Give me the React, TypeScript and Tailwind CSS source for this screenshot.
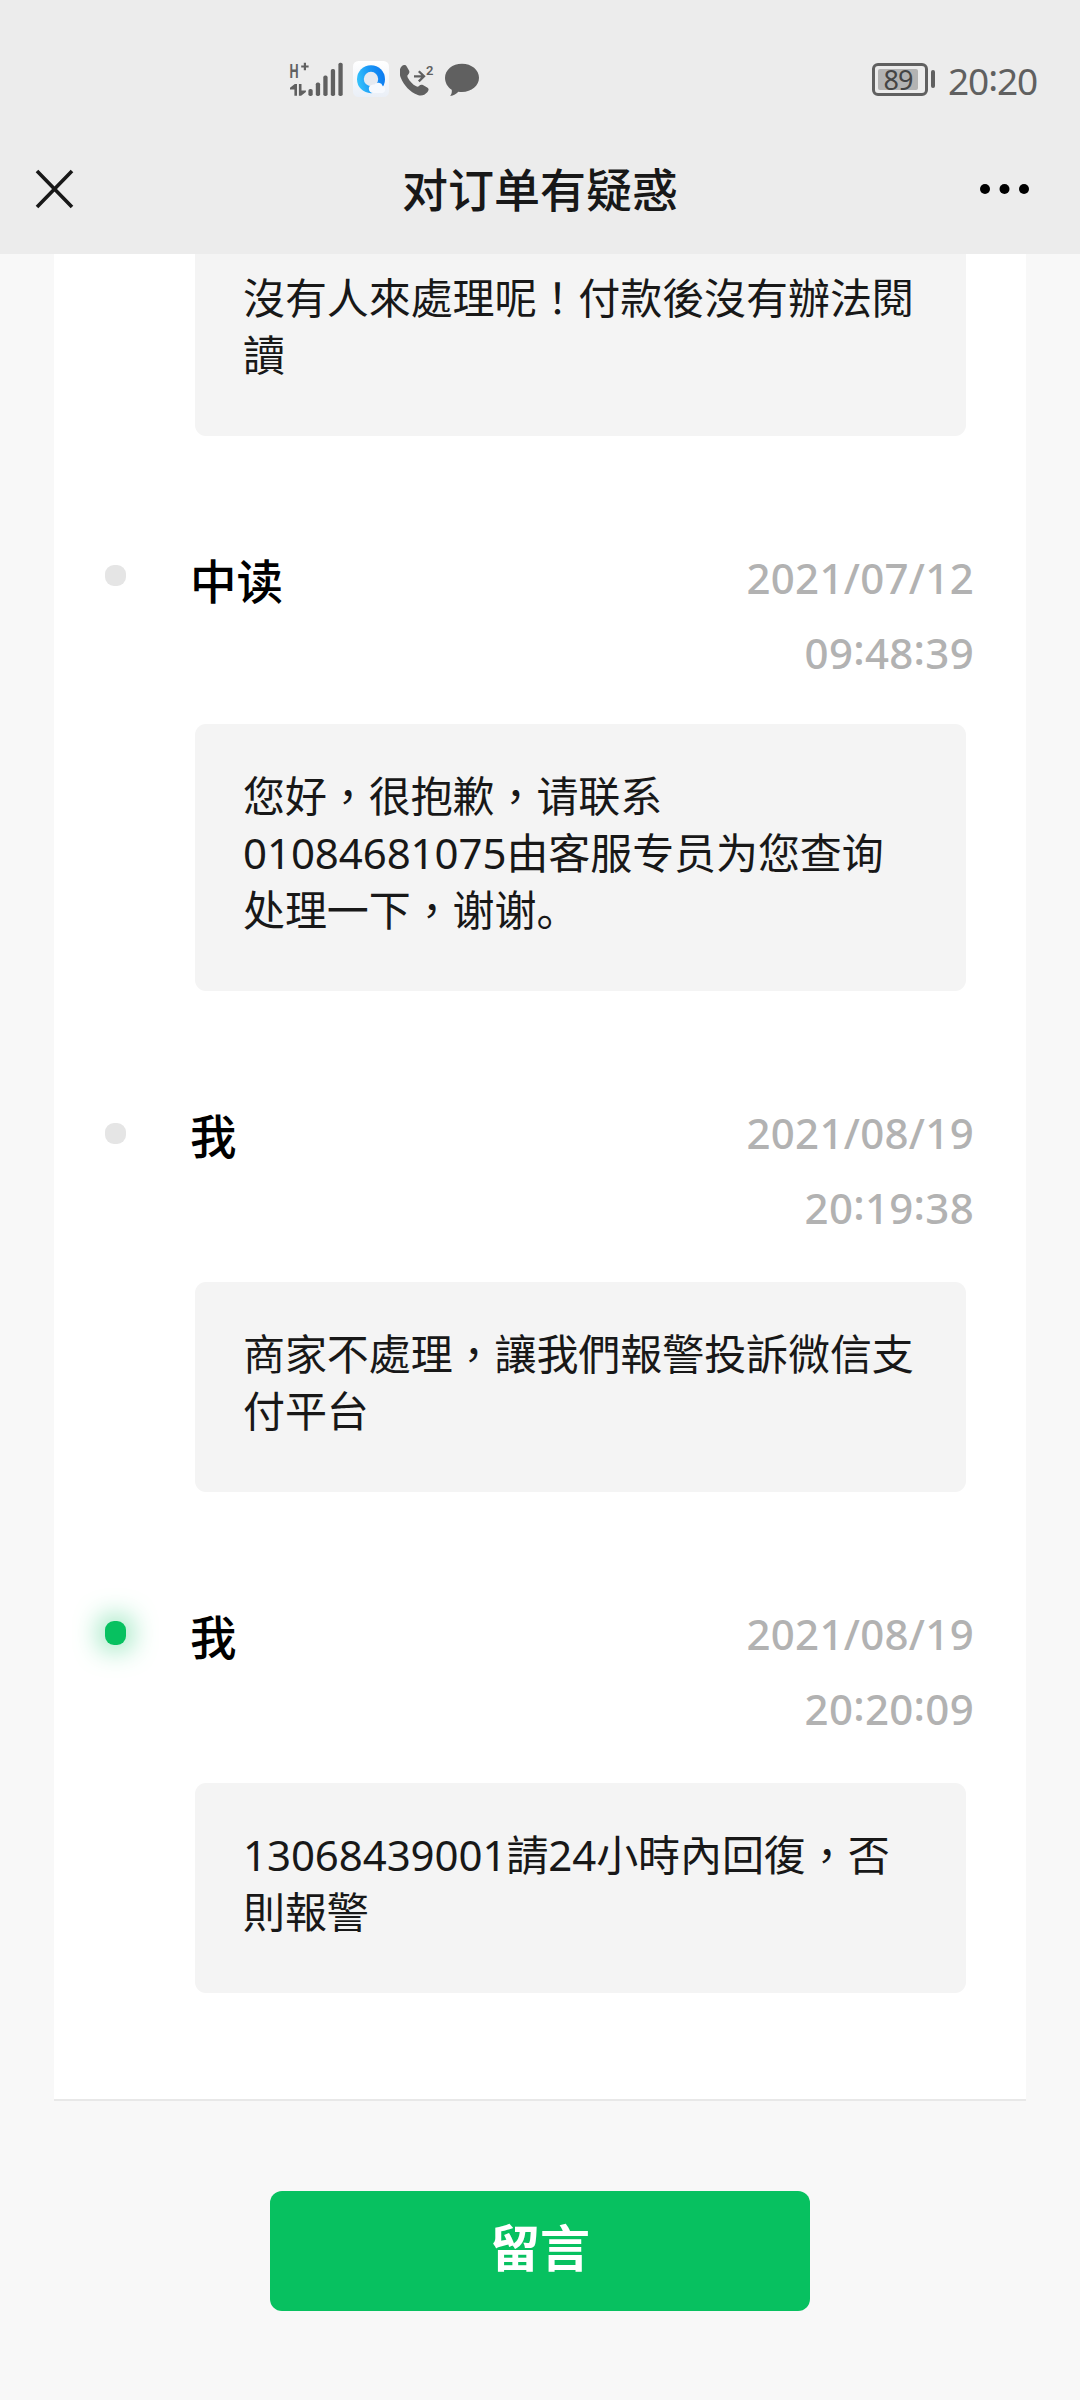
import clsx from "clsx";
import { Fragment } from "react";

type Message = {
  author: string;
  date: string;
  time: string;
  lines: string[];
  simplified?: boolean;
  active?: boolean;
  dotClass: string;
  bubbleClass: string;
};

const SC = "font-['Noto_Sans','Noto_Sans_CJK_SC',sans-serif]";
const TC = "font-['Noto_Sans','Noto_Sans_CJK_TC',sans-serif]";

const MESSAGES: Message[] = [
  {
    author: "中读",
    date: "2021/07/12",
    time: "09:48:39",
    lines: ["您好，很抱歉，请联系", "01084681075由客服专员为您查询", "处理一下，谢谢。"],
    simplified: true,
    dotClass: "mt-[25px] h-[21px] bg-[#e5e5e5]",
    bubbleClass: "mt-[34px]",
  },
  {
    author: "我",
    date: "2021/08/19",
    time: "20:19:38",
    lines: ["商家不處理，讓我們報警投訴微信支", "付平台"],
    dotClass: "mt-[28px] h-[21px] bg-[#e5e5e5]",
    bubbleClass: "mt-[37px]",
  },
  {
    author: "我",
    date: "2021/08/19",
    time: "20:20:09",
    lines: ["13068439001請24小時內回復，否", "則報警"],
    active: true,
    dotClass: "mt-[25px] h-[24px] bg-[#07c160]",
    bubbleClass: "mt-[37px]",
  },
];

// Digits with the colons lifted to their vertical middle.
function Clock({ value }: { value: string }) {
  return (
    <>
      {value.split(":").map((part, i) => (
        <Fragment key={i}>
          {i > 0 && <span className="relative -top-[0.09em]">:</span>}
          {part}
        </Fragment>
      ))}
    </>
  );
}

function StatusBar() {
  return (
    <div className="flex h-[124px] items-start pt-[61px] pl-[286px] pr-[43px] text-[#606060]">
      <svg className="-mt-[8px]" width="58" height="44" viewBox="286 53 58 44" fill="currentColor">
        <text
          transform="translate(289.4 78) scale(0.6 1)"
          fontFamily="Liberation Sans, sans-serif"
          fontSize="21"
          fontWeight="700"
        >
          H
        </text>
        <path d="M301.2 66.5h7.4M304.9 62.8v7.4" stroke="currentColor" strokeWidth="2.2" />
        <path d="M297 84v11.8h-2.6v-6.4H290v-1.6l4.8-3.8z" />
        <path d="M298.9 84h2.6v6.4h4.4v1.6l-4.8 3.8h-2.2z" />
        <rect x="308.4" y="89" width="4.3" height="7" rx="1.8" />
        <rect x="315.8" y="82.4" width="4.3" height="13.6" rx="1.8" />
        <rect x="323.3" y="75.6" width="4.3" height="20.4" rx="1.8" />
        <rect x="330.8" y="69" width="4.3" height="27" rx="1.8" />
        <rect x="338.4" y="62.8" width="4.3" height="33.2" rx="1.8" />
      </svg>

      {/* Browser badge */}
      <svg className="ml-[9px]" width="36" height="36" viewBox="0 0 36 36">
        <defs>
          <linearGradient id="ring" x1="0" y1="0.6" x2="1" y2="0.4">
            <stop offset="0" stopColor="#35c3fb" />
            <stop offset="0.5" stopColor="#1a97f6" />
            <stop offset="1" stopColor="#0b7af0" />
          </linearGradient>
          <linearGradient id="tile" x1="0" y1="0" x2="0" y2="1">
            <stop offset="0" stopColor="#ffffff" />
            <stop offset="1" stopColor="#eaeff7" />
          </linearGradient>
        </defs>
        <rect width="36" height="36" rx="5.5" fill="url(#tile)" />
        <circle cx="18" cy="18.2" r="14" fill="url(#ring)" />
        <circle cx="18" cy="18" r="7.2" fill="#e6eaf1" />
        <path
          d="M20 32a4.2 4.2 0 0 1-1.5-8.1 4 4 0 0 1 2.7-.3 5 5 0 0 1 8.6 1.6A3.5 3.5 0 0 1 29.3 32z"
          fill="#f6f9fe"
        />
      </svg>

      {/* Call forwarding on line 2 */}
      <svg className="ml-[11px]" width="34" height="36" viewBox="400 61 34 36" fill="currentColor">
        <path d="M401.5 66.5c1.8-1.8 4-1.9 5.2 0l2.3 4.1c.8 1.5.4 2.7-.8 3.8-1 1-1.1 1.8-.5 3 2 3.8 4.8 6.8 8.5 8.9 1.3.7 2.1.5 3-.5 1.1-1.2 2.3-1.5 3.7-.8l4.3 2.4c1.9 1.1 1.8 3.1.1 4.9-2.5 2.8-5.7 4-9.5 2.7-7.7-2.8-13.9-9.5-17.1-17.5-1.5-3.9-1.6-8.3.8-11z" />
        <path
          d="M414 76.3h9.8M418.8 71.2l5.2 5.1-5.2 5.1"
          fill="none"
          stroke="currentColor"
          strokeWidth="2.3"
        />
        <text x="426" y="74.7" fontFamily="Roboto, sans-serif" fontSize="13" fontWeight="600">
          2
        </text>
      </svg>

      <svg className="ml-[11px]" width="35" height="36" viewBox="445 61 35 36" fill="currentColor">
        <path d="M462 63.7c9.600 0 17 6.200 17 14.100s-7.400 14.200-17 14.200c-1.300 0-2.500-.1-3.700-.3-1.900 2.200-4.600 3.700-8.100 4.300 1.400-1.900 1.900-4 1.500-6.200-4.100-2.600-6.700-7-6.700-12 0-7.900 7.400-14.100 17-14.100z" />
      </svg>

      <div className="ml-auto flex h-[36px] items-center">
        <div className="flex h-[33px] w-[56px] items-center rounded-[6px] border-[3px] border-[#606060] p-[3px]">
          <div
            className={clsx(
              SC,
              "flex h-[21px] w-[40px] items-center justify-center rounded-[2px] bg-[#b3b3b3] text-[27px] leading-none tracking-[-1px] text-[#444]"
            )}
          >
            89
          </div>
        </div>
        <div className="ml-[3px] h-[18px] w-[4px] rounded-[2px] bg-[#606060]" />
        <span className={clsx(SC, "mt-[2px] ml-[13px] w-[89px] text-[37px] leading-none tracking-[-1.1px]")}>
          <Clock value="20:20" />
        </span>
      </div>
    </div>
  );
}

function TitleBar() {
  return (
    <div className="flex h-[129px] items-center pl-[34px] pr-[50px]">
      <div className="w-[368px]">
        <svg width="41" height="41" viewBox="0 0 41 41" fill="none" stroke="#181818" strokeWidth="3.6">
          <path d="M3 3l35 36M38 3L3 39" />
        </svg>
      </div>
      <h1 className={clsx(SC, "text-[46px] leading-[60px] font-medium whitespace-nowrap text-[#181818]")}>
        对订单有疑惑
      </h1>
      <svg className="ml-auto" width="50" height="12" viewBox="0 0 50 12">
        <circle cx="5" cy="6" r="5" />
        <circle cx="24.5" cy="6" r="5" />
        <circle cx="44" cy="6" r="5" />
      </svg>
    </div>
  );
}

// Commas sit in the middle of their cell, full stops in the lower left corner.
function Line({ text }: { text: string }) {
  return (
    <>
      {text.split(/(，)/).map((part, i) => (
        <Fragment key={i}>
          {part === "，" ? <span className="font-['Noto_Sans_CJK_TC'] leading-none">，</span> : part}
        </Fragment>
      ))}
    </>
  );
}

function Bubble({ lines, simplified, className }: { lines: string[]; simplified?: boolean; className?: string }) {
  return (
    <div
      className={clsx(
        simplified ? SC : TC,
        "ml-[141px] w-[771px] bg-[#f4f4f4] px-[48px] text-[42px] text-[#181818]",
        className
      )}
    >
      {lines.map((line) => (
        <p key={line} className="h-[57px] leading-[57px] tracking-[-0.08px] whitespace-nowrap">
          <Line text={line} />
        </p>
      ))}
    </div>
  );
}

function TimelineItem({ message }: { message: Message }) {
  return (
    <li className="pt-[104px]">
      <div className="flex h-[150px] items-start pl-[51px] pr-[52px]">
        <span
          className={clsx(
            "w-[21px] rounded-[9px]",
            message.dotClass,
            message.active && "shadow-[0_0_30px_#07c160]"
          )}
        />
        <span className={clsx(SC, "ml-[64px] pt-[4px] text-[46.5px] leading-[75px] font-medium text-black")}>
          {message.author}
        </span>
        <div
          className={clsx(
            SC,
            "ml-auto text-right text-[42px] leading-[75px] font-medium tracking-[0.3px] text-[#b2b2b2]"
          )}
        >
          <div>{message.date}</div>
          <div>
            <Clock value={message.time} />
          </div>
        </div>
      </div>
      <Bubble
        lines={message.lines}
        simplified={message.simplified}
        className={clsx("rounded-[11px] pt-[43px] pb-[53px]", message.bubbleClass)}
      />
    </li>
  );
}

export default function App() {
  return (
    <div className="flex h-[2400px] w-[1080px] flex-col overflow-hidden bg-[#f8f8f8]">
      <header className="h-[254px] shrink-0 bg-[#ececec]">
        <StatusBar />
        <TitleBar />
      </header>

      <main className="mx-[54px] h-[1847px] shrink-0 border-b-2 border-[#e8e8e8] bg-white">
        <Bubble
          lines={["沒有人來處理呢！付款後沒有辦法閱", "讀"]}
          className="rounded-b-[11px] pt-[15px] pb-[53px]"
        />
        <ul>
          {MESSAGES.map((message) => (
            <TimelineItem key={message.time} message={message} />
          ))}
        </ul>
      </main>

      <button
        className={clsx(
          TC,
          "mx-auto mt-[90px] h-[120px] w-[540px] shrink-0 rounded-[12px] bg-[#07c160] pb-[6px] text-[50px] font-bold text-white"
        )}
      >
        留言
      </button>
    </div>
  );
}
